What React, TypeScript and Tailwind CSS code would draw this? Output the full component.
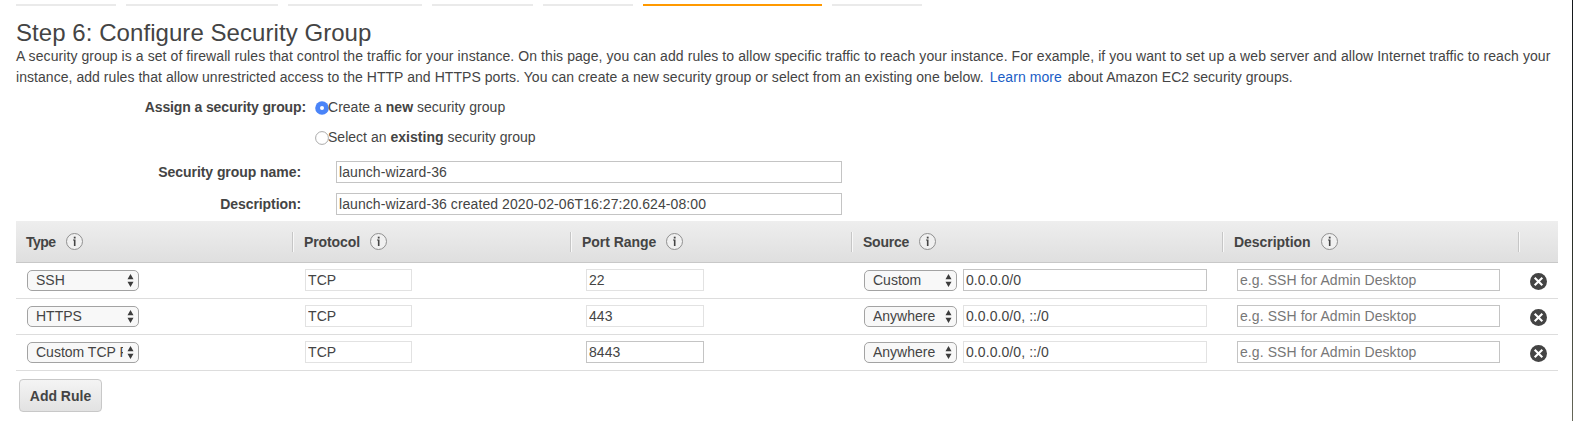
import React from "react";

const steps = [
  { width: "w-[100px]", active: false },
  { width: "w-[152px]", active: false },
  { width: "w-[134px]", active: false },
  { width: "w-[101px]", active: false },
  { width: "w-[90px]", active: false },
  { width: "w-[179px]", active: true },
  { width: "w-[90px]", active: false },
];

const columns = [
  { label: "Type", spacing: "tracking-[-0.5px]" },
  { label: "Protocol", spacing: "tracking-[-0.1px]" },
  { label: "Port Range", spacing: "tracking-[-0.05px]" },
  { label: "Source", spacing: "tracking-[-0.25px]" },
  { label: "Description", spacing: "tracking-[-0.04px]" },
];

const rules = [
  { type: "SSH", port: "22", portEditable: false, source: "Custom", cidr: "0.0.0.0/0", cidrEditable: true },
  { type: "HTTPS", port: "443", portEditable: false, source: "Anywhere", cidr: "0.0.0.0/0, ::/0", cidrEditable: false },
  { type: "Custom TCP Rule", port: "8443", portEditable: true, source: "Anywhere", cidr: "0.0.0.0/0, ::/0", cidrEditable: false },
];

const grid = "grid grid-cols-[277px_278px_281px_371px_296px_39px]";

function InfoIcon() {
  return (
    <svg className="mb-[2px] h-[17px] w-[17px] shrink-0" viewBox="0 0 17 17">
      <circle cx="8.5" cy="8.5" r="8" fill="#f0f0f0" stroke="#8f8f8f" />
      <rect x="7.8" y="3.7" width="1.8" height="1.8" fill="#444" />
      <path d="M7 6.6h2.5v6.4H7.9V7.6H7z" fill="#444" />
    </svg>
  );
}

function RemoveIcon() {
  return (
    <svg className="h-[17px] w-[17px]" viewBox="0 0 17 17">
      <circle cx="8.5" cy="8.5" r="8.5" fill="#444" />
      <path d="M4.7 4.7l7.6 7.6M12.3 4.7l-7.6 7.6" stroke="#fff" strokeWidth="2.1" />
    </svg>
  );
}

function Field({ value, placeholder, width, enabled = true }: { value?: string; placeholder?: string; width: string; enabled?: boolean }) {
  return (
    <input
      className={`block h-[22px] border bg-white px-[2px] pb-px text-sm leading-5 tracking-[0.08px] text-[#444] outline-none placeholder:text-[#777] placeholder:opacity-100 ${width} ${enabled ? "border-[#c4c4c4]" : "border-[#e2e2e2]"}`}
      defaultValue={value}
      placeholder={placeholder}
      readOnly={!enabled}
    />
  );
}

function Select({ value, width }: { value: string; width: string }) {
  return (
    <button className={`mt-px flex h-[21px] items-center rounded-[5px] border border-[#a3a3a3] bg-[#f8f8f8] pr-1 pl-2 text-left text-sm leading-[17px] ${width}`}>
      <span className="mr-1 mb-px h-[18px] min-w-0 flex-1 overflow-hidden leading-[18px] whitespace-nowrap">{value}</span>
      <svg className="h-[13px] w-[7px] shrink-0" viewBox="0 0 7 13">
        <path d="M3.5 0L6.5 5.2h-6zM3.5 13L.5 7.8h6z" fill="#3c3c3c" />
      </svg>
    </button>
  );
}

export default function App() {
  return (
    <div className="flex h-[421px] w-[1573px] overflow-hidden bg-white font-['Liberation_Sans',Arial,sans-serif] text-sm text-[#444]">
      <main className="w-[1572px] pl-4">
        <nav className="flex gap-[10px] pt-1">
          {steps.map((s, i) => (
            <div key={i} className={`h-[2px] ${s.width} ${s.active ? "bg-[#f90]" : "bg-[#eaeaea]"}`} />
          ))}
        </nav>

        <h1 className="mt-[13px] h-[27px] text-2xl leading-7 tracking-[0.06px] whitespace-nowrap">Step 6: Configure Security Group</h1>
        <div className="h-[42px] leading-[21px] whitespace-nowrap">
          <p className="tracking-[0.078px]">
            A security group is a set of firewall rules that control the traffic for your instance. On this page, you can add rules to allow specific traffic to reach your instance. For example, if you want to set up a web server and allow Internet traffic to reach your
          </p>
          <p className="tracking-[0.05px]">
            instance, add rules that allow unrestricted access to the HTTP and HTTPS ports. You can create a new security group or select from an existing one below.
            <a className="mx-[6px] text-[#1b5dc6]">Learn more</a>
            about Amazon EC2 security groups.
          </p>
        </div>

        <div className="mt-[9px] flex h-5 items-center">
          <b className="w-[290px] text-right tracking-[-0.12px]">Assign a security group:</b>
          <span className="ml-[9px] flex h-[14px] w-[13px] items-center justify-center pt-px">
            <svg className="h-[14px] w-[14px] shrink-0" viewBox="0 0 14 14">
              <circle cx="7" cy="7" r="6.8" fill="#4a84f8" />
              <circle cx="7" cy="7" r="2" fill="#fff" />
            </svg>
          </span>
          <span className="tracking-[0.02px]">Create a <b>new</b> security group</span>
        </div>
        <div className="mt-[10px] flex h-5 items-center pl-[299px]">
          <span className="flex h-[14px] w-[13px] items-center justify-center pt-px">
            <svg className="h-[14px] w-[14px] shrink-0" viewBox="0 0 14 14">
              <circle cx="7" cy="7" r="6.4" fill="#fff" stroke="#aaa" />
            </svg>
          </span>
          <span className="tracking-[0.02px]">Select an <b>existing</b> security group</span>
        </div>
        <div className="mt-[14px] flex h-[22px] items-center">
          <b className="mr-[35px] w-[285px] text-right tracking-[-0.06px]">Security group name:</b>
          <Field value="launch-wizard-36" width="w-[506px]" />
        </div>
        <div className="mt-[10px] flex h-[22px] items-center">
          <b className="mr-[35px] w-[285px] text-right tracking-[-0.08px]">Description:</b>
          <Field value="launch-wizard-36 created 2020-02-06T16:27:20.624-08:00" width="w-[506px]" />
        </div>

        <section className="mt-[6px] w-[1542px]">
          <div className={`${grid} h-[42px] border-b border-[#c8c8c8] bg-linear-to-b from-[#eeeeee] to-[#dfdfdf]`}>
            {columns.map((c) => (
              <div key={c.label} className="my-[11px] flex items-center border-r border-[#c6c6c6] pl-[11px] shadow-[1px_0_0_#f8f8f8] first:pl-[10px]">
                <b className={`mr-[10px] ${c.spacing}`}>{c.label}</b>
                <InfoIcon />
              </div>
            ))}
          </div>
          {rules.map((r) => (
            <div key={r.type} className={`${grid} h-9 border-b border-[#ddd] pt-[6px]`}>
              <div className="pl-[11px]"><Select value={r.type} width="w-[112px]" /></div>
              <div className="pl-3"><Field value="TCP" width="w-[107px]" enabled={false} /></div>
              <div className="pl-[15px]"><Field value={r.port} width="w-[118px]" enabled={r.portEditable} /></div>
              <div className="flex gap-[6px] pl-3">
                <Select value={r.source} width="w-[93px]" />
                <Field value={r.cidr} width="w-[244px]" enabled={r.cidrEditable} />
              </div>
              <div className="pl-[14px]"><Field placeholder="e.g. SSH for Admin Desktop" width="w-[263px]" /></div>
              <div className="pt-1 pl-[11px]"><RemoveIcon /></div>
            </div>
          ))}
        </section>
        <button className="mt-2 ml-[3px] block h-[33px] w-[83px] rounded-[4px] border border-[#c8c8c8] bg-linear-to-b from-[#f4f4f4] to-[#e2e2e2] text-sm font-bold">
          Add Rule
        </button>
      </main>
      <aside className="w-px bg-linear-to-b from-[#15181c] via-[#222722] to-[#67685a]" />
    </div>
  );
}
